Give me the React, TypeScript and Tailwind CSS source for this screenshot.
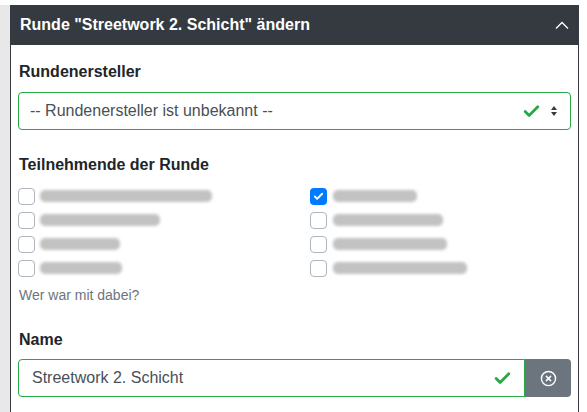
import { Check, CircleX } from 'lucide-react';

const left = [172, 120, 80, 82];
const right = [84, 110, 114, 134];

function Blur({ w }: { w: number }) {
  return (
    <div className="h-[18px] flex items-center" style={{ width: w }}>
      <div className="h-[12px] w-full rounded-[5px] bg-[#c2c2c2] blur-[1.5px]" />
    </div>
  );
}

function Box({ checked }: { checked?: boolean }) {
  return checked ? (
    <span className="w-[17px] h-[17px] rounded-[4px] bg-[#007bff] flex items-center justify-center shrink-0">
      <Check className="w-[11px] h-[11px] text-white" strokeWidth={4} />
    </span>
  ) : (
    <span className="w-[17px] h-[17px] rounded-[4px] border border-[#adb5bd] bg-white shrink-0" />
  );
}

export default function App() {
  return (
    <div className="w-[587px] h-[412px] bg-white overflow-hidden pt-[5px] flex" style={{ fontFamily: '"Liberation Sans", Arial, sans-serif' }}>
      <div className="w-[10px] bg-[#e8e8e8] shrink-0" />
      <div className="w-[569px] flex flex-col border-x border-[#343a40]">
        <div className="h-[40px] bg-[#343a40] flex items-center justify-between pl-[9px] pr-[9px]">
          <span className="text-white font-bold text-[16px]">Runde "Streetwork 2. Schicht" ändern</span>
          <svg width="14" height="8" viewBox="0 0 14 8" className="text-white">
            <path d="M1 7.5 L7 1.5 L13 7.5" fill="none" stroke="currentColor" strokeWidth="1.3" />
          </svg>
        </div>
        <div className="flex-1 bg-white px-[7px] pt-[17px]">
          <div className="text-[#212529] font-bold text-[16px] px-[1px] h-[20px] leading-[20px]">Rundenersteller</div>
          <div className="mt-[10px] h-[38px] border border-[#28a745] rounded-[4px] flex items-center pl-[11px] pr-[12px]">
            <span className="flex-1 text-[16px] text-[#495057]">-- Rundenersteller ist unbekannt --</span>
            <Check className="w-[19px] h-[19px] text-[#28a745] mr-[9px]" strokeWidth={3.5} />
            <svg width="8" height="12" viewBox="0 0 8 12" className="text-[#343a40]">
              <path d="M4 1 L7 5 H1 Z M4 11 L1 7 H7 Z" fill="currentColor" />
            </svg>
          </div>
          <div className="mt-[25px] text-[#212529] font-bold text-[16px] px-[1px] h-[20px] leading-[20px]">Teilnehmende der Runde</div>
          <div className="mt-[12px] grid grid-cols-2 w-[500px] gap-y-[6px]">
            {left.map((w, i) => (
              <div key={i} className="contents">
                <div className="flex items-center gap-[5px]">
                  <Box />
                  <Blur w={w} />
                </div>
                <div className="flex items-center gap-[6px] pl-[42px]">
                  <Box checked={i === 0} />
                  <Blur w={right[i]} />
                </div>
              </div>
            ))}
          </div>
          <div className="mt-[8px] text-[14px] text-[#6c757d] px-[1px]">Wer war mit dabei?</div>
          <div className="mt-[24px] text-[#212529] font-bold text-[16px] px-[1px] h-[20px] leading-[20px]">Name</div>
          <div className="mt-[9px] h-[38px] flex">
            <div className="flex-1 border border-[#28a745] rounded-l-[4px] flex items-center pl-[13px] pr-[12px]">
              <span className="flex-1 text-[16px] text-[#495057]">Streetwork 2. Schicht</span>
              <Check className="w-[19px] h-[19px] text-[#28a745]" strokeWidth={3.5} />
            </div>
            <div className="w-[46px] bg-[#6c757d] rounded-r-[4px] flex items-center justify-center">
              <CircleX className="w-[17px] h-[17px] text-white" strokeWidth={2} />
            </div>
          </div>
        </div>
      </div>
      <div className="flex-1 bg-white" />
    </div>
  );
}
